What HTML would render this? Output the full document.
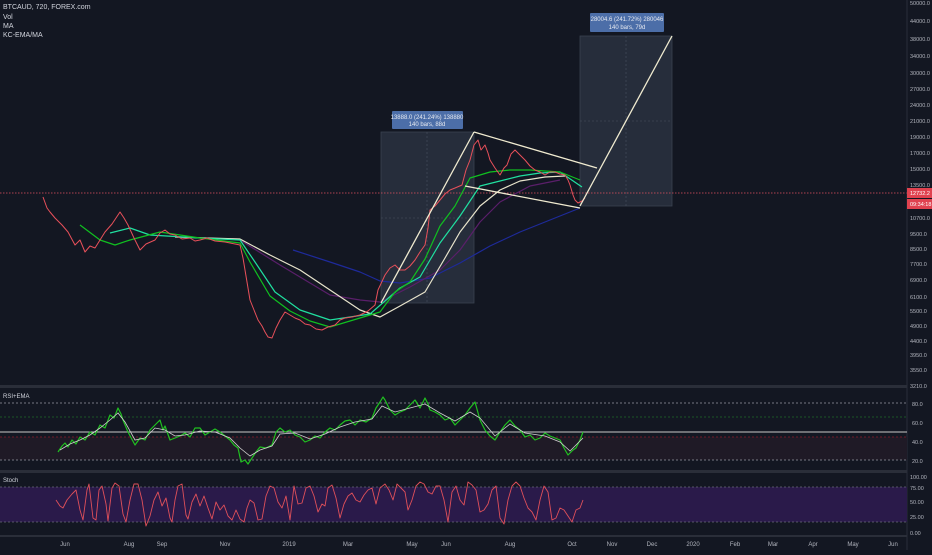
<!DOCTYPE html>
<html><head><meta charset="utf-8"><style>
html,body{margin:0;padding:0;background:#131722;}
body{width:932px;height:550px;overflow:hidden;font-family:"Liberation Sans",sans-serif;}
svg text{font-family:"Liberation Sans",sans-serif;}
</style></head><body>
<svg width="932" height="550" viewBox="0 0 932 550" xmlns="http://www.w3.org/2000/svg">
<rect width="932" height="550" fill="#131722"/>
<!-- header -->
<g fill="#d1d4dc" font-size="7">
<text x="3" y="9">BTCAUD, 720, FOREX.com</text>
<text x="3" y="19">Vol</text>
<text x="3" y="28">MA</text>
<text x="3" y="37">KC-EMA/MA</text>
</g>
<!-- boxes -->
<rect x="381" y="132" width="93" height="171" fill="#2a3140" fill-opacity="0.85" stroke="#3a4150" stroke-width="0.8"/>
<line x1="427" y1="132" x2="427" y2="303" stroke="#4a5060" stroke-dasharray="2,2" stroke-width="0.6"/>
<line x1="381" y1="218" x2="474" y2="218" stroke="#4a5060" stroke-dasharray="2,2" stroke-width="0.6"/>
<rect x="392" y="111" width="71" height="18" rx="1" fill="#4c6ea8"/>
<text x="427" y="119" fill="#e6e9f0" font-size="6" text-anchor="middle">13888.0 (241.24%) 138880</text>
<text x="427" y="126" fill="#e6e9f0" font-size="6" text-anchor="middle">140 bars, 88d</text>

<rect x="580" y="36" width="92" height="170" fill="#2a3140" fill-opacity="0.85" stroke="#3a4150" stroke-width="0.8"/>
<line x1="626" y1="36" x2="626" y2="206" stroke="#4a5060" stroke-dasharray="2,2" stroke-width="0.6"/>
<line x1="580" y1="121" x2="672" y2="121" stroke="#4a5060" stroke-dasharray="2,2" stroke-width="0.6"/>
<rect x="590" y="13" width="74" height="19" rx="1" fill="#4c6ea8"/>
<text x="627" y="21" fill="#e6e9f0" font-size="6" text-anchor="middle">28004.6 (241.72%) 280046</text>
<text x="627" y="29" fill="#e6e9f0" font-size="6" text-anchor="middle">140 bars, 79d</text>

<!-- current price dotted line -->
<line x1="0" y1="193" x2="907" y2="193" stroke="#e05060" stroke-dasharray="1.5,1.5" stroke-width="0.8"/>

<!-- MAs -->
<g fill="none" stroke-width="1.2" stroke-linejoin="round">
<polyline stroke="#1e2a9a" points="293,250 330,262 360,272 380,281 400,283 430,278 460,263 490,246 520,232 550,220 580,208"/>
<polyline stroke="#5a1f6a" points="240,240 280,265 330,295 360,300 380,302 410,287 440,270 460,250 480,222 500,202 530,186 560,180"/>
<polyline stroke="#e8e4cc" points="175,237 240,239 270,255 300,270 330,290 360,310 380,317 400,306 425,292 445,258 460,232 480,206 500,190 520,181 545,177 565,176"/>
<polyline stroke="#20e0a0" points="110,233 130,228 150,235 200,238 240,240 255,262 275,292 300,310 330,320 370,314 400,288 420,277 440,243 460,216 480,186 500,181 520,176 540,173 560,172 582,187"/>
<polyline stroke="#10c020" points="80,225 100,240 115,245 130,240 160,232 200,238 240,243 250,262 270,296 290,311 310,321 330,327 350,321 380,312 395,292 410,282 425,259 440,226 455,206 470,178 490,172 510,170 530,170 560,172 580,180"/>
</g>
<!-- price -->
<polyline fill="none" stroke="#e8505a" stroke-width="1" stroke-linejoin="round" points="43,197 47,208 50,212 55,218 62,225 68,232 75,245 80,240 85,252 90,246 95,248 100,240 105,232 112,224 120,212 124,218 128,225 134,238 140,250 146,244 155,240 160,233 165,230 170,234 175,235 182,239 190,238 195,241 200,240 207,238 215,241 225,242 240,245 243,258 245,270 248,288 250,300 254,310 258,320 262,326 265,332 268,337 272,338 276,328 280,320 285,312 290,315 295,318 300,320 305,324 310,325 316,329 322,330 328,327 335,325 340,320 345,318 352,317 360,315 368,311 375,305 378,290 385,275 390,268 395,265 400,270 405,270 410,266 415,260 420,252 425,245 428,228 430,210 435,206 440,200 445,194 450,190 455,188 462,185 466,170 470,160 474,145 478,140 481,150 485,145 488,153 490,160 495,168 500,175 504,168 507,165 511,154 515,150 520,155 525,160 530,166 535,170 540,172 545,175 550,172 555,172 560,174 565,175 568,180 570,185 573,195 575,200 578,203 582,201 585,198"/>
<!-- trend lines -->
<g stroke="#f0ebd0" stroke-width="1.3" fill="none">
<line x1="381" y1="303" x2="474" y2="132"/>
<line x1="474" y1="132" x2="597" y2="168"/>
<line x1="465" y1="186" x2="580" y2="208"/>
<line x1="580" y1="206" x2="672" y2="36"/>
</g>

<!-- price axis -->
<line x1="907" y1="0" x2="907" y2="550" stroke="#2a2e39" stroke-width="1"/>
<g fill="#b2b5be" font-size="5.5">
<text x="910" y="5">50000.0</text><text x="910" y="23">44000.0</text><text x="910" y="41">38000.0</text>
<text x="910" y="58">34000.0</text><text x="910" y="75">30000.0</text><text x="910" y="91">27000.0</text>
<text x="910" y="107">24000.0</text><text x="910" y="123">21000.0</text><text x="910" y="139">19000.0</text>
<text x="910" y="155">17000.0</text><text x="910" y="171">15000.0</text><text x="910" y="187">13500.0</text>
<text x="910" y="220">10700.0</text><text x="910" y="236">9500.0</text><text x="910" y="251">8500.0</text>
<text x="910" y="266">7700.0</text><text x="910" y="282">6900.0</text><text x="910" y="299">6100.0</text>
<text x="910" y="313">5500.0</text><text x="910" y="328">4900.0</text><text x="910" y="343">4400.0</text>
<text x="910" y="357">3950.0</text><text x="910" y="372">3550.0</text><text x="910" y="388">3210.0</text>
</g>
<rect x="907" y="188" width="25" height="10" fill="#e0424f"/>
<text x="910" y="195" fill="#fff" font-size="5.5">12732.2</text>
<rect x="907" y="199" width="25" height="10" fill="#e0424f"/>
<text x="910" y="206" fill="#fff" font-size="5.5">09:34:18</text>

<!-- panel separators -->
<rect x="0" y="385" width="907" height="3" fill="#2a2e39"/>
<rect x="0" y="470" width="907" height="3" fill="#2a2e39"/>
<rect x="0" y="535" width="907" height="2" fill="#2a2e39"/>

<!-- RSI panel -->
<text x="3" y="398" fill="#d1d4dc" font-size="6">RSI+EMA</text>
<rect x="0" y="437" width="907" height="23" fill="#1f1a26"/>
<line x1="0" y1="403" x2="907" y2="403" stroke="#9598a1" stroke-dasharray="2,2" stroke-width="0.7"/>
<line x1="0" y1="417" x2="907" y2="417" stroke="#1f6a2a" stroke-dasharray="2,2" stroke-width="0.7"/>
<line x1="0" y1="432" x2="907" y2="432" stroke="#c8c8c8" stroke-width="1"/>
<line x1="0" y1="437" x2="907" y2="437" stroke="#8a1a2a" stroke-dasharray="2,2" stroke-width="0.8"/>
<line x1="0" y1="460" x2="907" y2="460" stroke="#9598a1" stroke-dasharray="2,2" stroke-width="0.7"/>
<polyline fill="none" stroke="#20c020" stroke-width="1.2" stroke-linejoin="round" points="58,452 62,446 65,443 68,447 72,440 76,444 80,437 85,440 90,432 95,435 100,425 105,428 110,415 114,418 118,408 121,414 123,420 128,432 135,445 140,438 145,440 150,430 155,425 160,420 163,430 165,426 170,440 175,438 180,436 185,433 190,437 195,428 200,428 205,435 210,432 215,429 220,432 225,436 230,440 234,445 238,448 241,462 245,460 248,464 252,458 256,452 260,447 266,448 272,445 276,432 280,428 285,432 290,430 295,435 300,437 305,442 310,440 315,436 320,438 325,432 330,428 335,430 340,425 345,421 350,420 355,425 360,420 366,422 372,418 376,408 380,402 383,397 385,400 390,410 395,415 400,412 405,410 410,405 415,400 420,408 425,398 428,404 430,410 435,412 440,415 445,420 450,418 455,425 460,420 465,415 470,408 475,402 480,420 485,430 490,436 495,440 500,432 505,425 510,420 515,426 520,430 525,437 530,435 535,440 540,438 545,433 550,436 555,438 560,440 564,448 568,455 571,452 573,450 576,448 580,440 583,432"/>
<polyline fill="none" stroke="#d0d0d0" stroke-width="0.8" points="60,450 70,444 80,440 90,435 100,428 110,420 118,413 125,422 135,440 145,438 155,428 165,430 175,436 185,435 200,431 215,432 230,438 240,448 250,456 260,450 272,446 280,434 295,433 310,439 325,434 340,427 355,422 372,419 382,406 395,412 410,408 425,404 440,413 455,421 470,412 480,418 495,436 510,424 525,433 545,436 560,442 570,451 583,438"/>
<g fill="#b2b5be" font-size="5.5"><text x="912" y="406">80.0</text><text x="912" y="425">60.0</text><text x="912" y="444">40.0</text><text x="912" y="463">20.0</text></g>

<!-- Stoch panel -->
<text x="3" y="482" fill="#d1d4dc" font-size="6">Stoch</text>
<rect x="0" y="487" width="907" height="35" fill="#2a1a4a"/>
<line x1="0" y1="487" x2="907" y2="487" stroke="#6a6a7a" stroke-dasharray="2,2" stroke-width="0.7"/>
<line x1="0" y1="522" x2="907" y2="522" stroke="#6a6a7a" stroke-dasharray="2,2" stroke-width="0.7"/>
<polyline fill="none" stroke="#e0505a" stroke-width="0.9" stroke-linejoin="round" points="56,500 60,506 63,508 67,500 72,494 76,490 80,510 83,520 87,490 89,484 93,518 96,520 99,490 102,486 106,504 108,521 112,488 115,483 119,486 123,514 126,522 130,500 134,484 138,484 142,500 146,526 150,516 154,500 158,492 162,506 166,498 170,518 172,522 175,500 178,486 182,484 186,515 188,519 192,502 196,494 200,506 204,496 208,508 212,519 216,502 220,510 224,505 228,516 232,520 236,510 240,519 244,522 247,508 250,500 254,503 258,520 262,519 266,496 270,486 274,488 278,502 282,508 286,496 290,520 294,486 298,504 302,503 306,488 310,486 314,496 318,512 322,504 325,506 328,488 332,485 336,498 340,518 344,504 348,496 352,493 356,500 360,502 364,495 368,490 372,488 376,504 380,488 385,484 389,490 393,500 397,484 401,488 405,492 408,510 412,500 416,486 420,482 424,484 428,492 432,494 436,486 440,486 444,500 448,522 452,492 456,486 460,500 464,505 468,482 472,485 476,490 480,512 484,510 488,504 492,490 496,486 500,518 504,524 508,500 512,486 516,482 520,486 524,498 528,508 532,512 536,520 540,500 544,486 548,492 552,520 556,518 560,508 564,510 568,516 572,522 576,510 580,508 583,500"/>
<g fill="#b2b5be" font-size="5.5"><text x="910" y="479">100.00</text><text x="910" y="490">75.00</text><text x="910" y="504">50.00</text><text x="910" y="519">25.00</text><text x="910" y="535">0.00</text></g>

<!-- time axis -->
<g fill="#b2b5be" font-size="6" text-anchor="middle">
<text x="65" y="546">Jun</text><text x="129" y="546">Aug</text><text x="162" y="546">Sep</text>
<text x="225" y="546">Nov</text><text x="289" y="546">2019</text><text x="348" y="546">Mar</text>
<text x="412" y="546">May</text><text x="446" y="546">Jun</text><text x="510" y="546">Aug</text>
<text x="572" y="546">Oct</text><text x="612" y="546">Nov</text><text x="652" y="546">Dec</text>
<text x="693" y="546">2020</text><text x="735" y="546">Feb</text><text x="773" y="546">Mar</text>
<text x="813" y="546">Apr</text><text x="853" y="546">May</text><text x="893" y="546">Jun</text>
</g>
</svg>
</body></html>
